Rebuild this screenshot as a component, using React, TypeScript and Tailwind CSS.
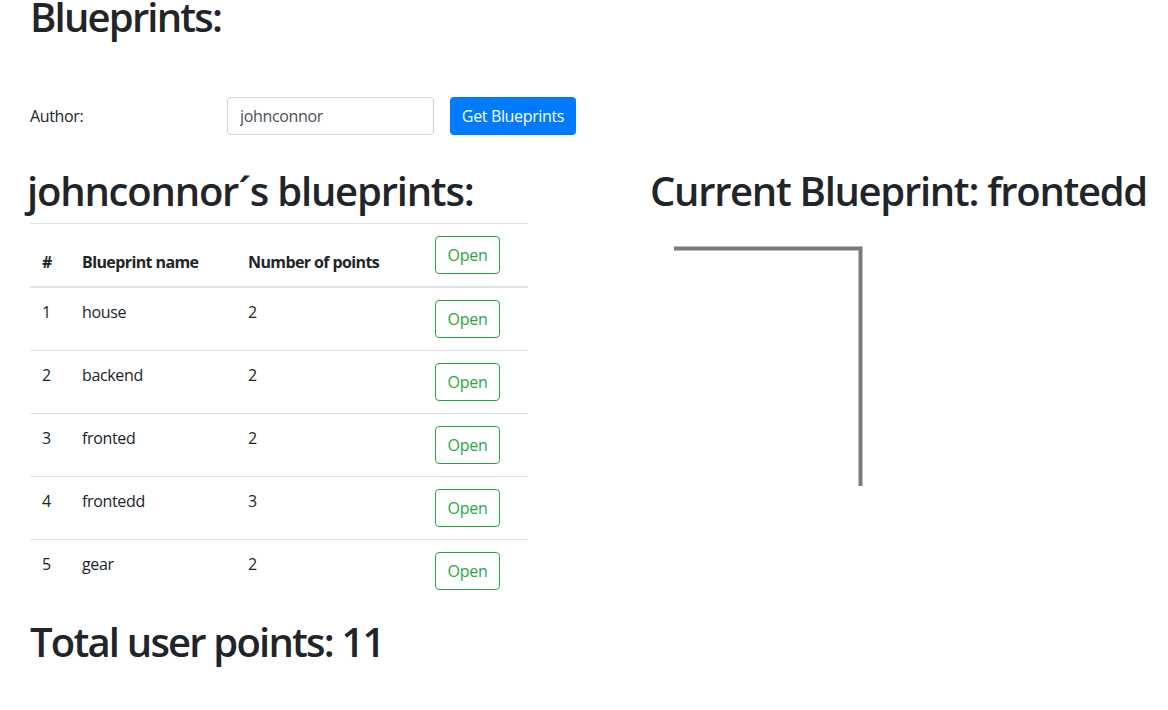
import React from "react";

const rows = [
  { id: 1, name: "house", points: 2 },
  { id: 2, name: "backend", points: 2 },
  { id: 3, name: "fronted", points: 2 },
  { id: 4, name: "frontedd", points: 3 },
  { id: 5, name: "gear", points: 2 },
];

function OpenBtn() {
  return (
    <button className="h-[38px] w-[65px] rounded-[4px] border border-[#28a745] text-[16px] leading-[24px] font-normal tracking-[-0.3px] text-[#28a745] bg-white">
      Open
    </button>
  );
}

export default function App() {
  return (
    <div
      className="min-h-[710px] bg-white text-[#212529] pl-[30px] tracking-[-0.35px]"
      style={{ fontFamily: '"Open Sans", "Noto Sans", sans-serif' }}
    >
      <h1 className="mt-[-7px] text-[40px] leading-[48px] font-semibold tracking-[-1.8px]">Blueprints:</h1>

      <div className="mt-[56px] flex items-center h-[38px]">
        <label className="w-[197px] text-[16px] leading-[24px]">Author:</label>
        <input
          readOnly
          value="johnconnor"
          className="h-[38px] w-[207px] rounded-[4px] border border-[#ced4da] px-[12px] text-[16px] text-[#495057] outline-none tracking-[-0.35px]"
        />
        <button className="ml-[16px] h-[38px] w-[126px] rounded-[4px] bg-[#007bff] text-[16px] text-white">
          Get Blueprints
        </button>
      </div>

      <div className="mt-[32px] flex">
        <div className="w-[498px]">
          <h1 className="text-[40px] leading-[48px] font-semibold tracking-[-1.2px] mb-[8px] ml-[-3px]">johnconnor´s blueprints:</h1>
          <table className="w-[498px] border-collapse text-[16px] leading-[24px]">
            <thead>
              <tr className="border-t border-[#dee2e6]">
                <th className="w-[40px] p-[12px] text-left align-bottom font-bold border-b-2 border-[#dee2e6]">#</th>
                <th className="w-[166px] p-[12px] text-left align-bottom font-bold tracking-[-0.6px] border-b-2 border-[#dee2e6]">Blueprint name</th>
                <th className="w-[187px] p-[12px] text-left align-bottom font-bold tracking-[-0.6px] border-b-2 border-[#dee2e6]">Number of points</th>
                <th className="p-[12px] text-left align-bottom border-b-2 border-[#dee2e6]">
                  <OpenBtn />
                </th>
              </tr>
            </thead>
            <tbody>
              {rows.map((r, i) => (
                <tr key={r.id} className={i > 0 ? "border-t border-[#dee2e6]" : ""}>
                  <td className="p-[12px] align-top">{r.id}</td>
                  <td className="p-[12px] align-top">{r.name}</td>
                  <td className="p-[12px] align-top">{r.points}</td>
                  <td className="p-[12px] align-top">
                    <OpenBtn />
                  </td>
                </tr>
              ))}
            </tbody>
          </table>
          <h1 className="mt-[16px] text-[40px] leading-[48px] font-semibold tracking-[-1.8px]">Total user points: 11</h1>
        </div>

        <div className="ml-[122px]">
          <h1 className="text-[40px] leading-[48px] font-semibold tracking-[-1.3px] mb-[8px]">Current Blueprint: frontedd</h1>
          <svg width="300" height="300" viewBox="0 0 300 300" className="ml-[3px]">
            <path
              d="M21 25.5 H207.5 V263"
              fill="none"
              stroke="#7b7b7b"
              strokeWidth="4"
              style={{ filter: "blur(0.4px)" }}
            />
          </svg>
        </div>
      </div>
    </div>
  );
}
